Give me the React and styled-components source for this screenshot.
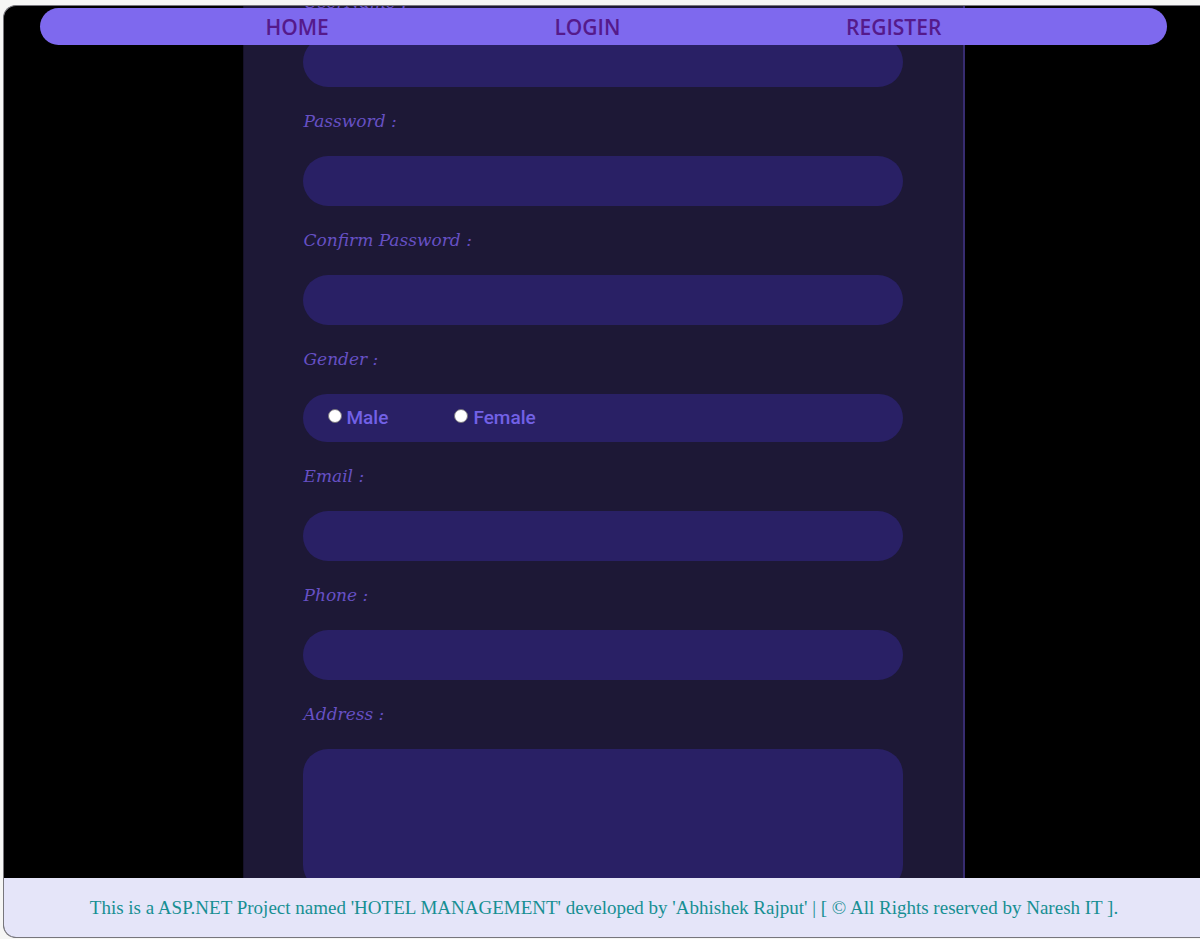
import React from "react";
import styled, { createGlobalStyle } from "styled-components";

const GlobalStyle = createGlobalStyle`
  * { box-sizing: border-box; }
  body { margin: 0; background: #f6f6f5; }
`;

const Page = styled.div`
  height: 100vh;
  padding: 5px 0 1px 3px;
`;

const Frame = styled.div`
  position: relative;
  display: flex;
  flex-direction: column;
  height: 100%;
  overflow: hidden;
  background: #000;
  border: 1px solid #77767c;
  border-right: 0;
  border-radius: 13px 0 0 13px;
`;

const Nav = styled.nav`
  position: absolute;
  z-index: 1;
  top: 2px;
  left: 3%;
  right: 33px;
  display: flex;
  justify-content: space-evenly;
  align-items: center;
  height: 37px;
  background: #7e69ee;
  border-radius: 19px;
`;

const NavLink = styled.a`
  font: 600 21px/28px "Comic Sans MS", "Open Sans", sans-serif;
  color: #551a8b;
  text-decoration: none;
`;

const Scroller = styled.main`
  flex: 1;
  min-height: 0;
  overflow: hidden;
  padding-left: 3px;
`;

const Panel = styled.form`
  max-width: 722px;
  margin: -38px auto 0;
  padding: 0 60px 60px 59px;
  background: #1d1836;
  border: 0 solid #372c70;
  border-width: 0 2px 0 1px;
  border-left-color: #151128;
`;

const Label = styled.label`
  display: block;
  padding: 22px 0 23px 1px;
  font: italic 17px/24px "Lucida Handwriting", "DejaVu Serif", serif;
  color: #6650c4;
`;

const Input = styled.input`
  display: block;
  width: 100%;
  height: 50px;
  padding: 0 24px;
  border: 0;
  border-radius: 25px;
  outline: 0;
  background: #292065;
  color: #7b68ee;
  font: 500 18px/24px Roboto, sans-serif;
`;

const TextArea = styled(Input)`
  height: 141px;
  padding: 16px 24px;
  resize: none;
`;

const Choices = styled.div`
  display: flex;
  gap: 66px;
  align-items: center;
  height: 48px;
  padding: 0 25px;
  border-radius: 24px;
  background: #292065;
`;

const Choice = styled.label`
  display: flex;
  align-items: center;
  gap: 5px;
  font: 500 19px/24px Roboto, sans-serif;
  color: #7261e6;
`;

const Radio = styled.input`
  appearance: none;
  width: 14px;
  height: 14px;
  margin: 0 0 4px;
  border: 1px solid #77747c;
  border-radius: 50%;
  background: #fff;
  &:checked { background: radial-gradient(#7261e6 40%, #fff 45%); }
`;

const Footer = styled.footer`
  padding: 18px 0 17px 4px;
  background: #e5e5f9;
  color: #178f93;
  text-align: center;
  font: 19px/24px "Liberation Serif", serif;
`;

function Field({ id, label, type = "text" }) {
  return (
    <div>
      <Label htmlFor={id}>{label} :</Label>
      <Input id={id} type={type} />
    </div>
  );
}

export default function App() {
  return (
    <Page>
      <GlobalStyle />
      <Frame>
        <Nav>
          <NavLink href="#home">HOME</NavLink>
          <NavLink href="#login">LOGIN</NavLink>
          <NavLink href="#register">REGISTER</NavLink>
        </Nav>
        <Scroller>
          <Panel>
            <Field id="username" label="UserName" />
            <Field id="password" label="Password" type="password" />
            <Field id="confirm" label="Confirm Password" type="password" />
            <div role="radiogroup" aria-labelledby="gender">
              <Label as="div" id="gender">Gender :</Label>
              <Choices>
                <Choice><Radio type="radio" name="gender" />Male</Choice>
                <Choice><Radio type="radio" name="gender" />Female</Choice>
              </Choices>
            </div>
            <Field id="email" label="Email" type="email" />
            <Field id="phone" label="Phone" type="tel" />
            <div>
              <Label htmlFor="address">Address :</Label>
              <TextArea as="textarea" id="address" />
            </div>
          </Panel>
        </Scroller>
        <Footer>
          This is a ASP.NET Project named 'HOTEL MANAGEMENT' developed by 'Abhishek Rajput' | [ © All Rights reserved by Naresh IT ].
        </Footer>
      </Frame>
    </Page>
  );
}
